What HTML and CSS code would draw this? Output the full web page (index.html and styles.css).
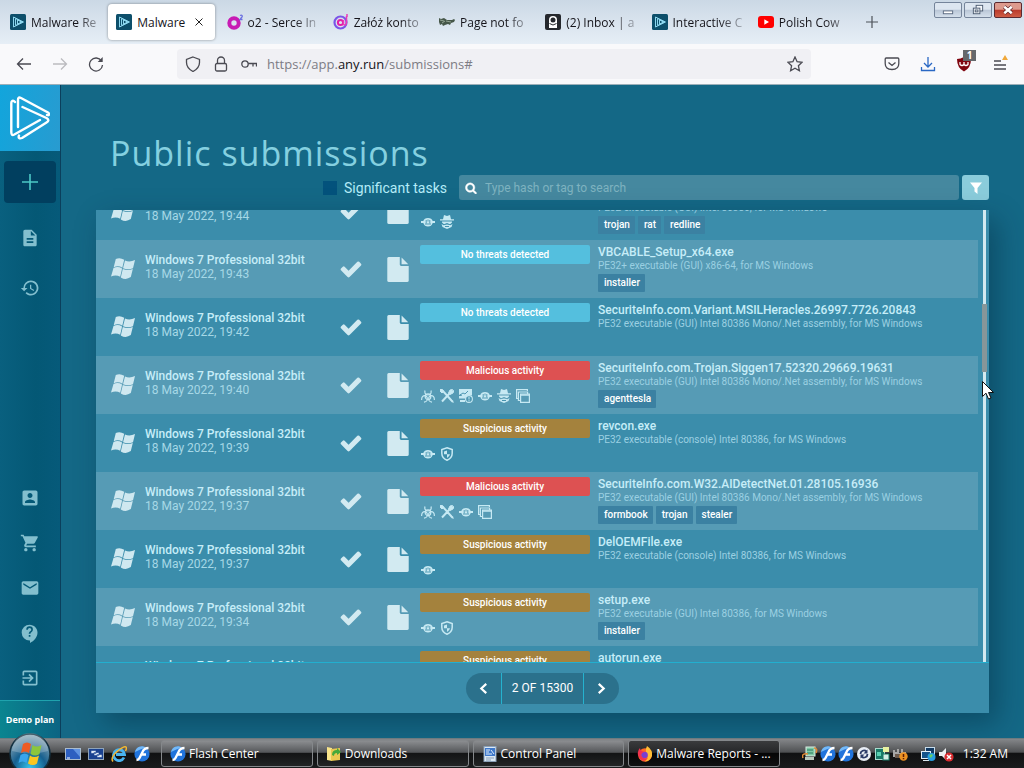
FILE: index.html
```html
<!DOCTYPE html>
<html lang="en">
<head>
  <meta charset="utf-8">
  <title>Malware Reports - Public submissions</title>
  <link rel="stylesheet" href="styles.css">
</head>
<body>
  <!-- icon sprite -->
  <svg class="sprite" aria-hidden="true">
    <symbol id="i-anyrun" viewBox="0 0 40 44">
      <g fill="none" stroke="currentColor" stroke-width="2.4" stroke-linejoin="round" stroke-linecap="round">
        <path d="M5 6C3 3.500 1.300 5 1.300 7V36c0 3 1 3.500 3 2.500L30 24"/>
        <path d="M37 19c2.500 1 2.500-1.500 1-2.500L11 2C8.500.8 8 2 8 4V31"/>
        <path d="M12.500 11l24 11c2.500 1.500 2.500 3 0 4.500L12 42c-2.500 1-4 0-3-2.500"/>
      </g>
    </symbol>
    <symbol id="i-favicon" viewBox="0 0 16 16">
      <rect width="16" height="16" rx="1.500" fill="#0d4f6b"/>
      <path d="M3.500 3v10l10-5zM5.500 4.500v7l7-3.500zM7.500 6v4l4-2z" fill="none" stroke="#8bd6ee"/>
    </symbol>
    <symbol id="i-o2" viewBox="0 0 16 16">
      <circle cx="7" cy="9" r="4.700" fill="none" stroke="#c81bb4" stroke-width="4"/>
      <path d="M13 1.500c2-1 3 .5 1.500 2L13 5.500h2.500" fill="none" stroke="#6b70e0" stroke-width="1.300"/>
    </symbol>
    <symbol id="i-at" viewBox="0 0 16 16">
      <circle cx="7.500" cy="8.500" r="6" fill="none" stroke="#7b55e8" stroke-width="2.200"/>
      <circle cx="7.500" cy="8.500" r="2.600" fill="none" stroke="#e21fa8" stroke-width="2"/>
      <path d="M10.500 6v4c1 2 3 1 3-1.500V2M14 0v3" fill="none" stroke="#e93bb8" stroke-width="1.500"/>
    </symbol>
    <symbol id="i-beast" viewBox="0 0 16 16">
      <path d="M0 4l2 1 3-1 3 2h5l2-1 1 1-1 2-3 1-1 2-2-1-3 1-2 1-1-2-2 1-1-3z" fill="#465749"/>
      <path d="M1 6l4 1M7 7l5 1M3 9l3-2" stroke="#93a493"/>
    </symbol>
    <symbol id="i-inbox" viewBox="0 0 16 16">
      <rect width="16" height="16" rx="2" fill="#25282d"/>
      <path d="M4 14V6a4 4 0 0 1 8 0v8z" fill="#fff"/>
      <circle cx="8" cy="6" r="2.500" fill="#25282d"/>
      <path d="M4.500 9.500q3.500 3 7 0" stroke="#25282d" fill="none"/>
    </symbol>
    <symbol id="i-youtube" viewBox="0 0 16 16">
      <rect y="2" width="16" height="12" rx="3" fill="#f00"/>
      <path d="M6.300 5.300v5.400L11 8z" fill="#fff"/>
    </symbol>
    <symbol id="i-windows" viewBox="0 0 24 22">
      <path fill="currentColor" d="M4.800 1Q9-1 13.200 1.800L11.300 9.800Q7.500 7.200 2.700 9.300zM14 2.400q4.500 2.200 10-.4l-2 8.200q-5 2.200-10 0zM2.500 10Q7 8 11.100 10.500L9.200 18.800Q5 16.500 0 18.500zM11.800 10.900q5 2.200 10 0l-2 8.200q-5 3.500-10 .3z"/>
    </symbol>
    <symbol id="i-check" viewBox="0 0 1792 1792">
      <path fill="currentColor" d="M1671 566q0 40-28 68l-724 724-136 136q-28 28-68 28t-68-28l-136-136-362-362q-28-28-28-68t28-68l136-136q28-28 68-28t68 28l294 295 656-657q28-28 68-28t68 28l136 136q28 28 28 68z"/>
    </symbol>
    <symbol id="i-file" viewBox="128 0 1536 1792">
      <path fill="currentColor" d="M1152 512v-472q22 14 36 28l408 408q14 14 28 36h-472zm-128 32q0 40 28 68t68 28h544v1056q0 40-28 68t-68 28h-1344q-40 0-68-28t-28-68v-1600q0-40 28-68t68-28h800v544z"/>
    </symbol>
    <symbol id="i-search" viewBox="0 0 1792 1792">
      <path fill="currentColor" stroke="currentColor" stroke-width="60" d="M1216 832q0-185-131.500-316.500t-316.500-131.500-316.500 131.500-131.500 316.500 131.500 316.500 316.500 131.500 316.500-131.500 131.500-316.500zm512 832q0 52-38 90t-90 38q-54 0-90-38l-343-342q-179 124-399 124-143 0-273.500-55.500t-225-150-150-225-55.500-273.500 55.500-273.500 150-225 225-150 273.500-55.500 273.500 55.500 225 150 150 225 55.500 273.500q0 220-124 399l343 343q37 37 37 90z"/>
    </symbol>
    <!-- activity icons -->
    <symbol id="i-net" viewBox="0 0 14 14">
      <path fill="currentColor" d="M0 6h2.300Q3.200 3 7 3t4.700 3H14v2h-2.300Q10.500 11.500 7 11.500T2.300 8H0z"/>
      <path d="M5.200 5v3.500M8.800 5v3.500M7 4.500v2M4 9h6" stroke="#4793af" stroke-width=".9"/>
    </symbol>
    <symbol id="i-spy" viewBox="0 0 14 14">
      <path fill="currentColor" d="M4 0l3 1 3-1 1 4.200h3v1.300H0V4.200h3zM2 6.500h10v1l-2 1.700L7 8 4 9.200 2 7.500zM1.500 9l2 1.200L7 9.500l3.500.7 2-1.200-1 3L7 14l-4.500-2z"/>
      <path d="M5 11.500h4" stroke="#4793af"/>
    </symbol>
    <symbol id="i-bio" viewBox="0 0 14 14">
      <g fill="none" stroke="currentColor" stroke-width="1.200">
        <path d="M4 1.500Q3 5.500 7 6 11 5.500 10 1.500M.6 11q0-4.500 3.500-4.300 3 .8 1.900 4.800-1 1.500-3 1.700M13.400 11q0-4.500-3.500-4.300-3 .8-1.900 4.800 1 1.500 3 1.700"/>
        <circle cx="7" cy="7.700" r="2.800"/>
      </g>
    </symbol>
    <symbol id="i-tools" viewBox="0 0 14 14">
      <path d="M1 1l2 1 8.500 9.500L13 13M13 2.500L10.500 4M9.500 4.500L2 12.500" fill="none" stroke="currentColor" stroke-width="2"/>
      <path d="M12.500.5L10 1 8.500 4l1.500 1.500L13 4l.8-2.500-2 1zM0 0l3 1v2L2 4 0 2zM10 10l3.500 3.500" fill="currentColor" stroke="currentColor"/>
    </symbol>
    <symbol id="i-monitor" viewBox="0 0 14 14">
      <path fill="currentColor" d="M0 0h13v6.500a4 4 0 0 0-5 3H0V7h3L2 5 0 6z"/>
      <path d="M1 6l3-2 2 1 3-3" fill="none" stroke="#4f98b3"/>
      <path fill="currentColor" d="M1 11h5v2H1z"/>
      <circle cx="10" cy="10" r="3.400" fill="#4f98b3" stroke="currentColor" stroke-width="1.100"/>
      <path d="M10 8v2.500M10 11.200v1" stroke="currentColor"/>
    </symbol>
    <symbol id="i-windows-stack" viewBox="0 0 14 14">
      <path fill="none" stroke="currentColor" stroke-width="1.200" d="M2 9.500H.6V.6h10.800V2M4 11.500H2.400V3h9.200v1.500M4.600 5h8.800v8.400H4.600z"/>
      <path d="M4 6h10" stroke="currentColor" stroke-width="1.500"/>
    </symbol>
    <symbol id="i-shield" viewBox="0 0 14 14">
      <path fill="none" stroke="currentColor" stroke-width="1.500" d="M7 .8l5.200 1.800v3.700q0 4.700-5.200 7-5.200-2.300-5.200-7V2.600z"/>
      <path fill="currentColor" d="M7 3.500v3.700H4V4.600zM7 7.200h3Q9.500 9.500 7 11z"/>
    </symbol>
    <symbol id="i-flash" viewBox="0 0 16 16">
      <circle cx="8" cy="8" r="7.600" fill="#2174dc"/>
      <path d="M1 6a7 7 0 0 1 11-4.500Q6 3 1 6z" fill="#74b9f7"/>
      <path d="M14.500 2Q10 2 8.500 6L5.500 12Q4.500 14 2.500 14M7 8.500h5" fill="none" stroke="#fff" stroke-width="2.400"/>
    </symbol>
  </svg>

  <header class="browser">
    <div class="tab-bar">
      <div class="tabs">
        <div class="tab"><svg><use href="#i-favicon"/></svg><span>Malware Re</span></div>
        <div class="tab active"><svg><use href="#i-favicon"/></svg><span>Malware</span>
          <button class="tab-close" aria-label="Close tab"><svg viewBox="0 0 8 8"><path d="M.5.5l7 7M7.500.5l-7 7" stroke="#222" fill="none"/></svg></button>
        </div>
        <div class="tab"><svg><use href="#i-o2"/></svg><span>o2 - Serce In</span></div>
        <div class="tab"><svg><use href="#i-at"/></svg><span>Załóż konto</span></div>
        <div class="tab"><svg><use href="#i-beast"/></svg><span>Page not fo</span></div>
        <div class="tab"><svg><use href="#i-inbox"/></svg><span>(2) Inbox | a</span></div>
        <div class="tab"><svg><use href="#i-favicon"/></svg><span>Interactive C</span></div>
        <div class="tab"><svg><use href="#i-youtube"/></svg><span>Polish Cow</span></div>
      </div>
      <button class="new-tab" aria-label="New tab"><svg viewBox="0 0 12 12"><path d="M6 0v12M0 6h12" stroke="#4d5259" stroke-width="1.200"/></svg></button>
      <div class="window-buttons">
        <button aria-label="Minimize"><svg viewBox="0 0 27 15"><rect x="8.500" y="8.500" width="10" height="3" fill="#fff" stroke="#5a6a80"/></svg></button>
        <button aria-label="Restore"><svg viewBox="0 0 27 15"><g fill="#f5f8fb" stroke="#4b5b70"><rect x="11.500" y="2.500" width="7" height="6"/><rect x="8.500" y="5.500" width="7" height="6"/><rect x="10.500" y="7.500" width="3" height="2"/></g></svg></button>
        <button class="close" aria-label="Close"><svg viewBox="0 0 27 15"><path d="M9.500 4l8 7M17.500 4l-8 7" stroke="#5b2226" stroke-width="4"/><path d="M9.500 4l8 7M17.500 4l-8 7" stroke="#fff" stroke-width="2.600"/></svg></button>
      </div>
    </div>
    <div class="toolbar">
      <button aria-label="Back"><svg viewBox="0 0 16 16"><path d="M15 8H1.500M7 2.500L1.500 8 7 13.500"/></svg></button>
      <button class="disabled" aria-label="Forward"><svg viewBox="0 0 16 16"><path d="M1 8h13.500M9 2.500L14.500 8 9 13.500"/></svg></button>
      <button aria-label="Reload"><svg viewBox="0 0 16 16"><path d="M13.500 5A6.500 6.500 0 1 0 14.500 9"/><path d="M14.700 1v5h-5z" fill="#4a4a52" stroke="none"/></svg></button>
      <div class="url-bar">
        <svg viewBox="0 0 16 16"><path d="M8 1l6.500 2.500v3Q14.500 12 8 15.500 1.500 12 1.500 6.500v-3z"/></svg>
        <svg viewBox="0 0 16 16"><rect x="2.500" y="7.500" width="11" height="7.500" rx="1.500"/><path d="M4.500 7.500V4.500a3.500 3.500 0 0 1 7 0v3"/></svg>
        <svg viewBox="0 0 16 16"><circle cx="4" cy="8" r="3.200"/><path d="M7.200 7.500h8.300v3M12 7.500v3"/></svg>
        <a class="url" href="#">https://app.<b>any.run</b>/submissions#</a>
        <svg viewBox="0 0 16 16"><path d="M8 1l2.100 4.700 5 .6-3.700 3.400 1 5L8 12.200l-4.400 2.500 1-5L.9 6.300l5-.6z"/></svg>
      </div>
      <button aria-label="Save to Pocket"><svg viewBox="0 0 16 16"><path d="M1.200 3q0-1 1-1h11.600q1 0 1 1v4.500q0 6-6.800 6t-6.800-6zM4.500 6.500L8 9.500l3.500-3"/></svg></button>
      <button class="download" aria-label="Downloads"><svg viewBox="0 0 16 16"><path d="M8 1v10M4 7l4 4 4-4M1.500 11v3.500h13V11"/></svg></button>
      <button class="ublock" aria-label="uBlock"><svg viewBox="0 0 16 16"><path d="M8 1q3.500 2 7 2 0 9-7 12.500Q1 12 1 3q3.500 0 7-2z" fill="#800610" stroke="none"/><path d="M4 6v2.500q2 2 4 0V6M8 8.500q2 2 4 0V6" stroke="#fff"/></svg><span class="count">1</span></button>
      <button class="menu" aria-label="Menu"><svg viewBox="0 0 16 20"><path d="M2 7h7M2 11h12M2 15h12"/><path d="M13 1l3 5h-6z" fill="#f0a83a" stroke="none"/></svg></button>
    </div>
  </header>

  <div class="app">
    <nav class="sidebar">
      <a class="logo" href="#" aria-label="ANY.RUN"><svg><use href="#i-anyrun"/></svg></a>
      <button class="new-task" aria-label="New task"><svg viewBox="0 0 16 16"><path d="M8 0v16M0 8h16" stroke="currentColor" stroke-width="1.600"/></svg></button>
      <a class="top-link" href="#" aria-label="Reports"><svg viewBox="0 0 24 24"><path d="M14 2H6c-1.100 0-2 .9-2 2v16c0 1.100.9 2 2 2h12c1.100 0 2-.9 2-2V8l-6-6zm2 16H8v-2h8v2zm0-4H8v-2h8v2zm-3-5V3.500L18.500 9H13z"/></svg></a>
      <a class="top-link" href="#" aria-label="History"><svg viewBox="0 0 24 24"><path d="M13 3a9 9 0 0 0-9 9H1l3.900 3.900L9 12H6c0-3.900 3.100-7 7-7s7 3.100 7 7-3.100 7-7 7c-1.900 0-3.700-.8-4.900-2.100l-1.400 1.400A9 9 0 1 0 13 3zm-1 5v5l4.300 2.500.7-1.200-3.500-2.100V8z"/></svg></a>
      <div class="sidebar-bottom">
        <a href="#" aria-label="Profile"><svg viewBox="0 0 24 24"><path d="M3 5v14c0 1.100.9 2 2 2h14c1.100 0 2-.9 2-2V5c0-1.100-.9-2-2-2H5c-1.100 0-2 .9-2 2zm12 4c0 1.700-1.300 3-3 3s-3-1.300-3-3 1.300-3 3-3 3 1.300 3 3zm-9 8c0-2 4-3.100 6-3.100s6 1.100 6 3.100v1H6v-1z"/></svg></a>
        <a href="#" aria-label="Pricing"><svg viewBox="0 0 24 24"><path d="M7 18c-1.100 0-2 .9-2 2s.9 2 2 2 2-.9 2-2-.9-2-2-2zM1 2v2h2l3.600 7.600-1.400 2.400c-.7 1.300.3 3 1.800 3h12v-2H7.400l1.100-2h7.500c.7 0 1.400-.4 1.700-1l3.600-6.500c.4-.7-.1-1.500-.9-1.500H5.200l-.9-2H1zm16 16c-1.100 0-2 .9-2 2s.9 2 2 2 2-.9 2-2-.9-2-2-2z"/></svg></a>
        <a href="#" aria-label="Contacts"><svg viewBox="0 0 24 24"><path d="M20 4H4c-1.100 0-2 .9-2 2v12c0 1.100.9 2 2 2h16c1.100 0 2-.9 2-2V6c0-1.100-.9-2-2-2zm0 4l-8 5-8-5V6l8 5 8-5v2z"/></svg></a>
        <a href="#" aria-label="FAQ"><svg viewBox="0 0 24 24"><path d="M11.500 2a9.500 9.500 0 0 0 0 19h.5v3c4.900-2.300 9-7 9-12.500C21 6.300 16.700 2 11.500 2zm1 14.500h-2v-2h2v2zm0-3.500h-2c0-3.200 3-3 3-5 0-1.100-.9-2-2-2s-2 .9-2 2h-2a4 4 0 0 1 8 0c0 2.500-3 2.800-3 5z"/></svg></a>
        <a href="#" aria-label="Sign out"><svg viewBox="0 0 24 24"><path d="M10.100 15.600l1.400 1.400 5-5-5-5-1.400 1.400 2.600 2.600H3v2h9.700l-2.600 2.600zM19 3H5a2 2 0 0 0-2 2v4h2V5h14v14H5v-4H3v4c0 1.100.9 2 2 2h14c1.100 0 2-.9 2-2V5c0-1.100-.9-2-2-2z"/></svg></a>
      </div>
      <a class="plan" href="#">Demo plan</a>
    </nav>

    <main class="content">
      <h1>Public submissions</h1>
      <form class="controls">
        <label class="significant"><input type="checkbox">Significant tasks</label>
        <label class="search">
          <svg><use href="#i-search"/></svg>
          <input type="text" placeholder="Type hash or tag to search" aria-label="Search">
        </label>
        <button type="button" class="filter" aria-label="Filter"><svg viewBox="0 0 12 12"><path d="M0 .5h12L7.500 6v6l-3-2.500V6z" fill="#fff"/></svg></button>
      </form>

      <section class="panel">
        <div class="list-wrap">
          <div class="list" id="list">
            <table>
              <colgroup><col class="c-os"><col class="c-check"><col class="c-file"><col class="c-verdict"><col></colgroup>
              <tbody>
                <tr>
                  <td><div class="os"><svg><use href="#i-windows"/></svg><div><b>Windows 7 Professional 32bit</b><span>18 May 2022, 19:44</span></div></div></td>
                  <td class="mid"><svg class="check"><use href="#i-check"/></svg></td>
                  <td class="mid"><svg class="file"><use href="#i-file"/></svg></td>
                  <td class="verdict"><span class="badge danger">Malicious activity</span><div class="icons"><svg><use href="#i-net"/></svg><svg><use href="#i-spy"/></svg></div></td>
                  <td class="name"><b>build.exe</b><p>PE32 executable (GUI) Intel 80386, for MS Windows</p><div class="tags"><span>trojan</span><span>rat</span><span>redline</span></div></td>
                </tr>
                <tr>
                  <td><div class="os"><svg><use href="#i-windows"/></svg><div><b>Windows 7 Professional 32bit</b><span>18 May 2022, 19:43</span></div></div></td>
                  <td class="mid"><svg class="check"><use href="#i-check"/></svg></td>
                  <td class="mid"><svg class="file"><use href="#i-file"/></svg></td>
                  <td class="verdict"><span class="badge clean">No threats detected</span></td>
                  <td class="name"><b>VBCABLE_Setup_x64.exe</b><p>PE32+ executable (GUI) x86-64, for MS Windows</p><div class="tags"><span>installer</span></div></td>
                </tr>
                <tr>
                  <td><div class="os"><svg><use href="#i-windows"/></svg><div><b>Windows 7 Professional 32bit</b><span>18 May 2022, 19:42</span></div></div></td>
                  <td class="mid"><svg class="check"><use href="#i-check"/></svg></td>
                  <td class="mid"><svg class="file"><use href="#i-file"/></svg></td>
                  <td class="verdict"><span class="badge clean">No threats detected</span></td>
                  <td class="name"><b>SecuriteInfo.com.Variant.MSILHeracles.26997.7726.20843</b><p>PE32 executable (GUI) Intel 80386 Mono/.Net assembly, for MS Windows</p></td>
                </tr>
                <tr>
                  <td><div class="os"><svg><use href="#i-windows"/></svg><div><b>Windows 7 Professional 32bit</b><span>18 May 2022, 19:40</span></div></div></td>
                  <td class="mid"><svg class="check"><use href="#i-check"/></svg></td>
                  <td class="mid"><svg class="file"><use href="#i-file"/></svg></td>
                  <td class="verdict"><span class="badge danger">Malicious activity</span><div class="icons"><svg><use href="#i-bio"/></svg><svg><use href="#i-tools"/></svg><svg><use href="#i-monitor"/></svg><svg><use href="#i-net"/></svg><svg><use href="#i-spy"/></svg><svg><use href="#i-windows-stack"/></svg></div></td>
                  <td class="name"><b>SecuriteInfo.com.Trojan.Siggen17.52320.29669.19631</b><p>PE32 executable (GUI) Intel 80386 Mono/.Net assembly, for MS Windows</p><div class="tags"><span>agenttesla</span></div></td>
                </tr>
                <tr>
                  <td><div class="os"><svg><use href="#i-windows"/></svg><div><b>Windows 7 Professional 32bit</b><span>18 May 2022, 19:39</span></div></div></td>
                  <td class="mid"><svg class="check"><use href="#i-check"/></svg></td>
                  <td class="mid"><svg class="file"><use href="#i-file"/></svg></td>
                  <td class="verdict"><span class="badge warning">Suspicious activity</span><div class="icons"><svg><use href="#i-net"/></svg><svg><use href="#i-shield"/></svg></div></td>
                  <td class="name"><b>revcon.exe</b><p>PE32 executable (console) Intel 80386, for MS Windows</p></td>
                </tr>
                <tr>
                  <td><div class="os"><svg><use href="#i-windows"/></svg><div><b>Windows 7 Professional 32bit</b><span>18 May 2022, 19:37</span></div></div></td>
                  <td class="mid"><svg class="check"><use href="#i-check"/></svg></td>
                  <td class="mid"><svg class="file"><use href="#i-file"/></svg></td>
                  <td class="verdict"><span class="badge danger">Malicious activity</span><div class="icons"><svg><use href="#i-bio"/></svg><svg><use href="#i-tools"/></svg><svg><use href="#i-net"/></svg><svg><use href="#i-windows-stack"/></svg></div></td>
                  <td class="name"><b>SecuriteInfo.com.W32.AIDetectNet.01.28105.16936</b><p>PE32 executable (GUI) Intel 80386 Mono/.Net assembly, for MS Windows</p><div class="tags"><span>formbook</span><span>trojan</span><span>stealer</span></div></td>
                </tr>
                <tr>
                  <td><div class="os"><svg><use href="#i-windows"/></svg><div><b>Windows 7 Professional 32bit</b><span>18 May 2022, 19:37</span></div></div></td>
                  <td class="mid"><svg class="check"><use href="#i-check"/></svg></td>
                  <td class="mid"><svg class="file"><use href="#i-file"/></svg></td>
                  <td class="verdict"><span class="badge warning">Suspicious activity</span><div class="icons"><svg><use href="#i-net"/></svg></div></td>
                  <td class="name"><b>DelOEMFile.exe</b><p>PE32 executable (console) Intel 80386, for MS Windows</p></td>
                </tr>
                <tr>
                  <td><div class="os"><svg><use href="#i-windows"/></svg><div><b>Windows 7 Professional 32bit</b><span>18 May 2022, 19:34</span></div></div></td>
                  <td class="mid"><svg class="check"><use href="#i-check"/></svg></td>
                  <td class="mid"><svg class="file"><use href="#i-file"/></svg></td>
                  <td class="verdict"><span class="badge warning">Suspicious activity</span><div class="icons"><svg><use href="#i-net"/></svg><svg><use href="#i-shield"/></svg></div></td>
                  <td class="name"><b>setup.exe</b><p>PE32 executable (GUI) Intel 80386, for MS Windows</p><div class="tags"><span>installer</span></div></td>
                </tr>
                <tr>
                  <td><div class="os"><svg><use href="#i-windows"/></svg><div><b>Windows 7 Professional 32bit</b><span>18 May 2022, 19:33</span></div></div></td>
                  <td class="mid"><svg class="check"><use href="#i-check"/></svg></td>
                  <td class="mid"><svg class="file"><use href="#i-file"/></svg></td>
                  <td class="verdict"><span class="badge warning">Suspicious activity</span></td>
                  <td class="name"><b>autorun.exe</b><p>PE32 executable (GUI) Intel 80386, for MS Windows</p></td>
                </tr>
              </tbody>
            </table>
          </div>
          <div class="scrollbar"><div class="thumb"></div></div>
        </div>
        <footer class="panel-footer">
          <div class="pager">
            <button aria-label="Previous page"><svg viewBox="0 0 8 10"><path d="M6.500.8L2 5l4.500 4.200"/></svg></button>
            <span>2 OF 15300</span>
            <button aria-label="Next page"><svg viewBox="0 0 8 10"><path d="M1.500.8L6 5 1.500 9.200"/></svg></button>
          </div>
        </footer>
      </section>
    </main>
  </div>

  <footer class="taskbar">
    <button class="start" aria-label="Start">
      <svg viewBox="0 0 42 42">
        <defs><radialGradient id="orb" cx=".5" cy=".85" r=".8"><stop offset="0" stop-color="#35c4ee"/><stop offset=".5" stop-color="#17608f"/><stop offset="1" stop-color="#8aa6b5"/></radialGradient></defs>
        <circle cx="21" cy="21" r="20" fill="url(#orb)" stroke="#123040" stroke-width="1.500"/>
        <path d="M3 18a18 18 0 0 1 36 0q-17 5-36 0z" fill="#fff" opacity=".22"/>
        <path d="M14 11q4-3 8 0l-2 9q-4-3-8 0z" fill="#ee5b23"/>
        <path d="M23.500 12q4 3 9 0l-2 9q-4 3-9 0z" fill="#8cc63c"/>
        <path d="M11.500 22q4-3 8 0l-2 8q-4-3-8 0z" fill="#38a5ec"/>
        <path d="M21 22.500q4 3 9 0l-2 8q-4 3-9 0z" fill="#fcc61f"/>
      </svg>
    </button>
    <div class="quick">
      <svg viewBox="0 0 16 16"><rect x=".5" y="2.500" width="15" height="11" fill="#2d5fc0" stroke="#a9bccf"/><path d="M8 3h7v8z" fill="#5f92e0"/><path d="M2 12h3" stroke="#fff"/></svg>
      <svg viewBox="0 0 16 16"><rect x=".5" y="2.500" width="15" height="11" fill="#1a4290" stroke="#8ea3ba"/><path d="M3 4.500h5v3H3zM6 6.500h5v3H6zM9 8.500h5v3H9z" fill="#dfeaf5" stroke="#1a4290" stroke-width=".6"/></svg>
      <svg viewBox="0 0 16 16"><path d="M13 11.500A5.500 5.500 0 1 1 13.500 8.500H5" fill="none" stroke="#49b4f0" stroke-width="2.800"/><path d="M2 15.500Q-1 12 6 5.500 13-.5 15 1q1 1-.5 4" fill="none" stroke="#f3b832" stroke-width="1.500"/></svg>
      <svg><use href="#i-flash"/></svg>
    </div>
    <div class="tasks">
      <button><svg><use href="#i-flash"/></svg>Flash Center</button>
      <button><svg viewBox="0 0 16 16"><path d="M1 1l5 1v13l-5-1z" fill="#f8e48a"/><path d="M5 3l9-1v12l-9 1z" fill="#e9c851"/><path d="M6 9q0-5 5-5V2l4 4-4 3V7q-3 0-3 3z" fill="#44a83b"/></svg>Downloads</button>
      <button><svg viewBox="0 0 16 16"><rect x="2" y=".5" width="12" height="15" fill="#dbe8f5" stroke="#8aa0b8"/><rect x="3" y="2" width="10" height="8" fill="#3e78cb"/><path d="M4 4h4M4 6h3M9 4l3 4M4 8h6" stroke="#dfeefd"/><path d="M4 12h8M4 14h5" stroke="#8aa0b8"/></svg>Control Panel</button>
      <button class="current"><svg viewBox="0 0 16 16"><circle cx="8" cy="9" r="6.800" fill="#ff6a25"/><path d="M10 0q6 4 5 10-2 5-7 5.500 5-4 1-9-1-3 1-6.500z" fill="#ffbd35"/><circle cx="7.500" cy="9" r="3.300" fill="#7b3fd0"/><path d="M1 9q-1-4 2-7 0 3 5 4-3 0-4 3 2 5 7 3-4 5-8 1z" fill="#f3324e"/></svg>Malware Reports - ...</button>
    </div>
    <div class="tray">
      <svg viewBox="0 0 16 16"><rect x="4" y="1" width="9" height="9" fill="#7fc9a5" stroke="#dbeee6"/><path d="M5 4h6M5 7h6" stroke="#2b7d60"/><path d="M3 11h9v3H3z" fill="#b9c9bd"/><path d="M1 12Q-1 7 6 8M12 2q4 0 2 5" fill="none" stroke="#e08a35" stroke-width="1.500"/></svg>
      <svg><use href="#i-flash"/></svg>
      <svg><use href="#i-flash"/></svg>
      <svg viewBox="0 0 16 16"><circle cx="8" cy="8" r="7" fill="#e9eef5"/><path d="M4.500 8a3.500 3.500 0 0 1 6-2.500M11.500 8a3.500 3.500 0 0 1-6 2.500" fill="none" stroke="#2b3b68" stroke-width="1.800"/><path d="M11.500 3.500v4h-4zM4.500 12.500v-4h4z" fill="#2b3b68"/></svg>
      <svg viewBox="0 0 16 16"><rect x="1.500" y="2.500" width="9" height="11" fill="#197a67" stroke="#a9ddcf"/><rect x="9" y="1" width="6" height="5" fill="#e8f2a0"/><rect x="9" y="8" width="6" height="6" fill="#d5efe6" stroke="#197a67"/><path d="M3 6h4v4H3z" fill="#58d0b0"/></svg>
      <svg viewBox="0 0 16 16"><path d="M1 4h2v2h2V3h2v4h2V3h2v3h3v5H1z" fill="#a7a7a7"/><path d="M3 8h6v4H3z" fill="#6b5b50"/><circle cx="11.500" cy="10.500" r="4.200" fill="#ec9222"/><path d="M11.500 8v3M11.500 12v1.300" stroke="#5e1e05" stroke-width="1.500"/></svg>
      <svg class="gap" viewBox="0 0 16 16"><rect x="5.500" y="1.500" width="9" height="7" fill="#123a63" stroke="#c7dceb"/><rect x="1.500" y="5.500" width="9" height="7" fill="#14548a" stroke="#e3eff7"/><path d="M3 14.500h6" stroke="#dce8ef"/><circle cx="11.500" cy="11" r="4" fill="#279ee0"/><path d="M9 10q2-3 4-1l-2 3z" fill="#67cf63"/></svg>
      <svg viewBox="0 0 16 16"><path d="M1 6h3l4-4v12l-4-4H1z" fill="#edf0f2"/><circle cx="11" cy="11" r="4.600" fill="#d92c30"/><path d="M9 9l4 4M13 9l-4 4" stroke="#fff" stroke-width="1.500"/></svg>
    </div>
    <time class="clock">1:32 AM</time>
  </footer>

  <svg class="cursor" viewBox="0 0 12 19"><path d="M.5.5v15l3.500-3.300L6.500 18l2.500-1-2.500-5.500h5z" fill="#fff" stroke="#111"/></svg>

  <script>
    // open the list part way through the first row
    document.getElementById("list").scrollTop = 28;
  </script>
</body>
</html>
```

FILE: styles.css
```css
* {
  box-sizing: border-box;
}

body {
  margin: 0;
  height: 100vh;
  display: flex;
  flex-direction: column;
  overflow: hidden;
  font-family: Roboto, "Liberation Sans", sans-serif;
  font-size: 12px;
  background: #146886;
}

button {
  border: 0;
  padding: 0;
  background: none;
  font: inherit;
  color: inherit;
}

button, a, label {
  display: flex;
  align-items: center;
}

a {
  color: inherit;
  text-decoration: none;
}

svg {
  display: block;
  flex: none;
}

.sprite {
  position: absolute;
  width: 0;
  height: 0;
}

/* Browser window */
.browser {
  font-family: "Open Sans", "Noto Sans", sans-serif;
  color: #15141a;
}

.tab-bar {
  height: 44px;
  display: flex;
  align-items: center;
  padding-left: 2px;
  background: linear-gradient(#cbd8e5, #d9e3ee 50%, #e6eef6);
}

.tabs {
  flex: 0 1 854px;
  min-width: 0;
  display: flex;
}

.tab {
  flex: 1 1 0;
  min-width: 0;
  height: 36px;
  display: flex;
  align-items: center;
  gap: 5px;
  padding-left: 8px;
}

.tab svg {
  width: 16px;
  height: 16px;
}

.tab span {
  flex: 1;
  min-width: 0;
  white-space: nowrap;
  -webkit-mask-image: linear-gradient(to right, #000 60%, transparent);
  mask-image: linear-gradient(to right, #000 60%, transparent);
}

.tab.active {
  margin-right: 4px;
  background: #fff;
  border-radius: 4px;
  box-shadow: 0 0 3px rgba(0, 0, 0, 0.4);
}

.tab.active span {
  -webkit-mask-image: none;
  mask-image: none;
}

.tab-close {
  padding-right: 12px;
}

.tab .tab-close svg {
  width: 8px;
  height: 8px;
}

.new-tab {
  margin-left: 10px;
}

.new-tab svg {
  width: 12px;
  height: 12px;
}

.window-buttons {
  align-self: flex-start;
  display: flex;
  gap: 2px;
  margin: 2px 2px 0 auto;
}

.window-buttons button {
  border: 1px solid #75849a;
  border-radius: 2px;
  background: linear-gradient(#dde6f0 45%, #b9c6d6 50%, #d5e0ec);
}

.window-buttons .close {
  border-color: #5b2a30;
  background: linear-gradient(#dd9a8d 45%, #b93a2b 50%, #cf5d45);
}

.window-buttons svg {
  width: 26px;
  height: 14px;
}

.toolbar {
  height: 41px;
  display: flex;
  align-items: center;
  gap: 20px;
  padding: 0 16px;
  background: #f9f9fb;
  border-bottom: 1px solid #9cafb9;
}

.toolbar svg {
  width: 16px;
  height: 16px;
  fill: none;
  stroke: #4a4a52;
  stroke-width: 1.3;
}

.toolbar .disabled {
  opacity: 0.35;
}

.toolbar .download svg {
  stroke: #2a68c4;
}

.toolbar .menu svg {
  height: 20px;
}

.url-bar {
  flex: 1;
  height: 30px;
  display: flex;
  align-items: center;
  gap: 12px;
  padding: 0 8px;
  margin: 0 53px;
  background: #f0f0f4;
  border-radius: 4px;
}

.url {
  flex: 1;
  margin-left: -2px;
  font-size: 13px;
  color: #7d7c84;
}

.url b {
  font-weight: 400;
  color: #15141a;
}

.ublock {
  position: relative;
}

.count {
  position: absolute;
  top: -6px;
  right: -4px;
  width: 13px;
  font-size: 10px;
  line-height: 11px;
  font-weight: 700;
  color: #fff;
  background: #65686b;
}

/* App */
.app {
  flex: 1;
  min-height: 0;
  display: flex;
}

.sidebar {
  width: 61px;
  display: flex;
  flex-direction: column;
  border-right: 1px solid #0b3f5c;
  background: linear-gradient(to right, #09607f, #045875 60%, #065a7a);
  color: #83bfce;
}

.logo {
  height: 66px;
  justify-content: center;
  background: linear-gradient(100deg, #12a5dc, #289bd0);
  color: #fff;
}

.logo svg {
  width: 40px;
  height: 44px;
}

.new-task {
  height: 42px;
  justify-content: center;
  margin: 10px 4px;
  border-radius: 4px;
  background: #013f5f;
  color: #4cc9c6;
}

.new-task svg {
  width: 16px;
  height: 16px;
}

.top-link svg,
.sidebar-bottom svg {
  width: 20px;
  height: 20px;
  fill: currentColor;
}

.top-link {
  height: 50px;
  justify-content: center;
}

.sidebar-bottom {
  margin-top: auto;
}

.sidebar-bottom a {
  height: 45px;
  justify-content: center;
}

.plan {
  height: 38px;
  justify-content: center;
  border-top: 1px solid #1fa3ae;
  background: linear-gradient(to right, #0a8590, #0b6483);
  color: #fff;
  font-family: "Open Sans", sans-serif;
  font-size: 9px;
  font-weight: 700;
}

.content {
  flex: 1;
  min-width: 0;
  display: flex;
  flex-direction: column;
  padding: 47px 35px 25px;
  background: #146886;
}

h1 {
  margin: 0 0 0 14px;
  font-family: "Open Sans", sans-serif;
  font-size: 34px;
  line-height: 43px;
  font-weight: 500;
  letter-spacing: 1px;
  color: #84d0e0;
}

.controls {
  display: flex;
  justify-content: flex-end;
  align-items: center;
  gap: 3px;
  margin-bottom: 10px;
}

.significant {
  gap: 7px;
  margin-right: 9px;
  font-size: 14px;
  color: #b5ecf8;
}

.significant input {
  appearance: none;
  width: 14px;
  height: 14px;
  margin: 0;
  background: #03527c;
}

.search {
  flex: 0 1 500px;
  height: 25px;
  gap: 8px;
  padding: 0 6px;
  border-radius: 3px;
  background: #45889f;
}

.search svg {
  width: 12px;
  height: 12px;
  color: #fff;
}

.search input {
  flex: 1;
  min-width: 0;
  border: 0;
  padding: 0;
  outline: 0;
  background: none;
  font: inherit;
  color: #fff;
}

.search input::placeholder {
  color: #7fb3c0;
}

.filter {
  width: 27px;
  height: 25px;
  justify-content: center;
  border-radius: 3px;
  background: #8accdb;
}

.filter svg {
  width: 12px;
  height: 12px;
}

.panel {
  flex: 1;
  min-height: 0;
  display: flex;
  flex-direction: column;
  background: #3b8dab;
  box-shadow: 8px 10px 26px rgba(0, 35, 55, 0.4);
}

.list-wrap {
  flex: 1;
  min-height: 0;
  display: flex;
}

.list {
  flex: 1;
  overflow: hidden;
}

table {
  width: 100%;
  table-layout: fixed;
  border-collapse: collapse;
}

.c-os { width: 228px; }
.c-check { width: 54px; }
.c-file { width: 40px; }
.c-verdict { width: 180px; }

tr {
  height: 58px;
}

tr:nth-child(even) {
  background: #569bb5;
}

td {
  padding: 0;
  vertical-align: top;
}

.os {
  display: flex;
  align-items: center;
  gap: 10px;
  padding: 13px 0 0 15px;
  line-height: 14px;
  color: #a6d8e6;
}

.os svg {
  width: 24px;
  height: 22px;
  margin-top: 4px;
  color: #cfe8f0;
}

.os b, .os span {
  display: block;
}

b {
  font-weight: 500;
}

.os b, .name b {
  color: #c6edf8;
}

td.mid {
  padding-top: 17px;
}

.mid svg {
  margin: 0 auto;
  color: #d2eaf1;
}

.check {
  width: 24px;
  height: 24px;
}

.file {
  width: 22px;
  height: 25px;
}

.verdict {
  padding: 5px 8px 0 2px;
}

.badge {
  display: block;
  height: 19px;
  line-height: 19px;
  border-radius: 2px;
  text-align: center;
  font-size: 10px;
  font-weight: 500;
  color: #fff;
}

.clean { background: #54bfde; }
.danger { background: #dd5152; }
.warning { background: #a4823d; }

.icons {
  display: flex;
  gap: 5px;
  padding: 9px 1px 0;
}

.icons svg {
  width: 14px;
  height: 14px;
  color: #c6e9f3;
}

.name b {
  display: block;
  padding-top: 5px;
  line-height: 14px;
}

.name p {
  margin: 0;
  font-size: 10px;
  line-height: 14px;
  color: #9bd0e2;
}

.tags {
  display: flex;
  gap: 3px;
  padding-top: 1px;
}

.tags span {
  padding: 0 5px 0 6px;
  font-size: 10px;
  line-height: 18px;
  font-weight: 500;
  color: #fff;
  background: #3b81a2;
  border-radius: 1px;
}

.scrollbar {
  width: 11px;
  background: linear-gradient(to right, transparent 5px, #d3e9f0 5px, #d3e9f0 8px, transparent 8px);
}

.thumb {
  height: 15%;
  margin: 94px 2px 0 4px;
  background: #879699;
}

.panel-footer {
  height: 51px;
  display: flex;
  align-items: center;
  justify-content: center;
  border-top: 1px solid #22afcf;
}

.pager {
  display: flex;
  height: 31px;
  line-height: 30px;
  border-radius: 16px;
  background: #2b718c;
  color: #fff;
}

.pager button {
  width: 35px;
  justify-content: center;
}

.pager span {
  padding: 0 10px;
  border: solid #25b2cf;
  border-width: 0 1px;
}

.pager svg {
  width: 9px;
  height: 11px;
  fill: none;
  stroke: #fff;
  stroke-width: 2;
}

/* Taskbar */
.taskbar {
  height: 30px;
  display: flex;
  align-items: center;
  padding: 0 16px 0 9px;
  border-top: 1px solid #6d7b80;
  background: linear-gradient(#85878a, #4f5153 45%, #101112 50%, #1a1c1d);
  font-family: "Open Sans", "Noto Sans", sans-serif;
  color: #fff;
}

.taskbar svg {
  width: 16px;
  height: 16px;
}

.taskbar .start svg {
  width: 42px;
  height: 42px;
}

.quick {
  display: flex;
  gap: 7px;
  margin: 0 11px 0 14px;
}

.tasks {
  flex: 0 1 619px;
  display: flex;
  gap: 4px;
}

.tasks button {
  flex: 1 1 0;
  min-width: 0;
  height: 27px;
  gap: 3px;
  padding-left: 8px;
  border: 1px solid #85888b;
  border-radius: 3px;
  background: linear-gradient(#8b8d90, #55575a 45%, #131415 50%, #222425);
  white-space: nowrap;
}

.tasks .current {
  background: linear-gradient(#3a3b3d, #262729 45%, #050506 50%, #101112);
}

.tray {
  display: flex;
  gap: 2px;
  margin-left: auto;
}

.tray .gap {
  margin-left: 10px;
}

.clock {
  margin-left: 9px;
}

.cursor {
  position: absolute;
  left: 982px;
  top: 381px;
  width: 12px;
  height: 19px;
}
```
